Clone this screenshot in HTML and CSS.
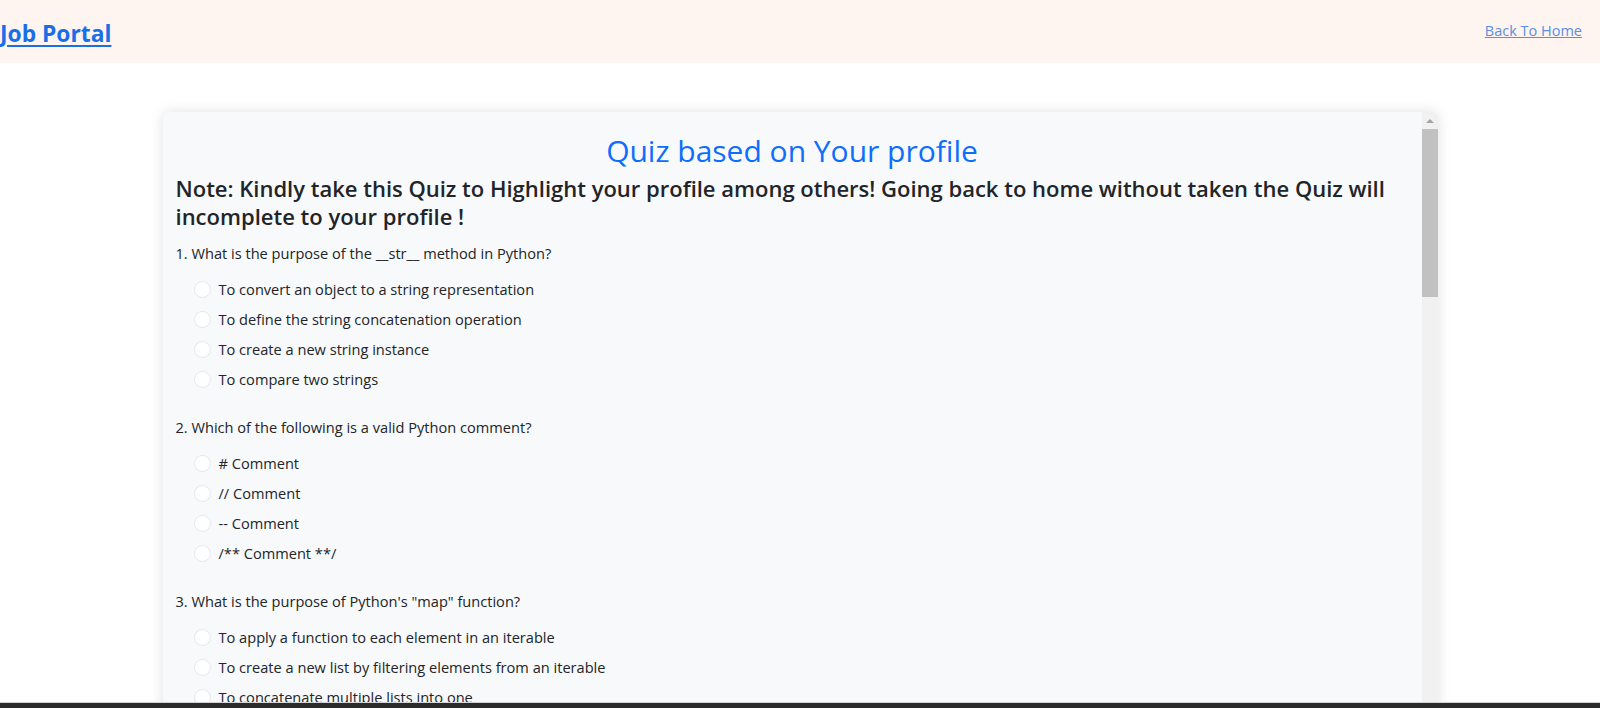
FILE: index.html
```html
<!DOCTYPE html>
<html lang="en">
<head>
<meta charset="utf-8">
<title>Job Portal - Quiz</title>
<link rel="stylesheet" href="styles.css">
</head>
<body>
<header class="topbar">
  <a class="brand" href="#">Job Portal</a>
  <a class="home-link" href="#">Back To Home</a>
</header>
<main class="page">
  <section class="card">
    <div class="card-body">
      <h2 class="quiz-title">Quiz based on Your profile</h2>
      <h4 class="note">Note: Kindly take this Quiz to Highlight your profile among others! Going back to home without taken the Quiz will incomplete to your profile !</h4>

      <div class="question">
        <p class="q-text">1. What is the purpose of the __str__ method in Python?</p>
        <ul class="options">
          <li class="option"><input type="radio" name="q1" class="radio"><label>To convert an object to a string representation</label></li>
          <li class="option"><input type="radio" name="q1" class="radio"><label>To define the string concatenation operation</label></li>
          <li class="option"><input type="radio" name="q1" class="radio"><label>To create a new string instance</label></li>
          <li class="option"><input type="radio" name="q1" class="radio"><label>To compare two strings</label></li>
        </ul>
      </div>

      <div class="question">
        <p class="q-text">2. Which of the following is a valid Python comment?</p>
        <ul class="options">
          <li class="option"><input type="radio" name="q2" class="radio"><label># Comment</label></li>
          <li class="option"><input type="radio" name="q2" class="radio"><label>// Comment</label></li>
          <li class="option"><input type="radio" name="q2" class="radio"><label>-- Comment</label></li>
          <li class="option"><input type="radio" name="q2" class="radio"><label>/** Comment **/</label></li>
        </ul>
      </div>

      <div class="question">
        <p class="q-text">3. What is the purpose of Python's "map" function?</p>
        <ul class="options">
          <li class="option"><input type="radio" name="q3" class="radio"><label>To apply a function to each element in an iterable</label></li>
          <li class="option"><input type="radio" name="q3" class="radio"><label>To create a new list by filtering elements from an iterable</label></li>
          <li class="option"><input type="radio" name="q3" class="radio"><label>To concatenate multiple lists into one</label></li>
          <li class="option"><input type="radio" name="q3" class="radio"><label>To sort the elements of an iterable</label></li>
        </ul>
      </div>
    </div>
    <div class="scrollbar">
      <div class="scroll-arrow"></div>
      <div class="scroll-thumb"></div>
    </div>
  </section>
</main>
<div class="taskbar"></div>
</body>
</html>
```

FILE: styles.css
```css
* { box-sizing: border-box; }

html, body {
  margin: 0;
  padding: 0;
  height: 100%;
  overflow: hidden;
  background: #ffffff;
}

body {
  font-family: "Open Sans", "Noto Sans", sans-serif;
  color: #212529;
}

.topbar {
  height: 63px;
  background: #fef4f0;
  display: flex;
  align-items: center;
  justify-content: space-between;
  padding: 0 18px 0 0;
}

.brand {
  font-size: 22.8px;
  font-weight: 700;
  color: #1a6fe8;
  text-decoration: underline;
  text-underline-offset: 3px;
  margin-top: 3px;
}

.home-link {
  font-size: 14.5px;
  color: #5a8ee6;
  text-decoration: underline;
  margin-top: -2px;
}

.page {
  padding-top: 49px;
  display: flex;
  justify-content: center;
}

.card {
  width: 1275px;
  height: 640px;
  background: #f8f9fa;
  border-radius: 6px;
  box-shadow: 0 0 14px rgba(0, 0, 0, 0.12);
  display: flex;
  overflow: hidden;
}

.card-body {
  flex: 1;
  padding: 20px 13px 0 13px;
}

.quiz-title {
  margin: 0 0 4px 0;
  text-align: center;
  font-size: 30px;
  font-weight: 400;
  line-height: 38px;
  color: #0d6efd;
}

.note {
  margin: 0 0 11px 0;
  font-size: 22px;
  font-weight: 600;
  line-height: 28px;
}

.question {
  margin-bottom: 21px;
}

.q-text {
  margin: 0 0 9px 0;
  font-size: 14.6px;
  line-height: 24px;
}

.options {
  list-style: none;
  margin: 0;
  padding: 0 0 0 18px;
}

.option {
  height: 30px;
  display: flex;
  align-items: center;
  gap: 8px;
  font-size: 14.6px;
}

.radio {
  appearance: none;
  -webkit-appearance: none;
  margin: 0;
  width: 17px;
  height: 17px;
  border-radius: 50%;
  background: #ffffff;
  border: 1px solid #e6e7e9;
  flex: none;
}

.scrollbar {
  width: 16px;
  flex: none;
  background: #f1f1f1;
  display: flex;
  flex-direction: column;
  align-items: stretch;
}

.scroll-arrow {
  height: 17px;
  display: flex;
  justify-content: center;
  align-items: center;
}

.scroll-arrow::before {
  content: "";
  width: 0;
  height: 0;
  border-left: 4px solid transparent;
  border-right: 4px solid transparent;
  border-bottom: 4px solid #a3a3a3;
}

.scroll-thumb {
  height: 168px;
  background: #c1c1c1;
}

.taskbar {
  position: fixed;
  left: 0;
  right: 0;
  bottom: 0;
  height: 6px;
  background: #2b2b2b;
  border-top: 1px solid #d4d4d4;
}
```
